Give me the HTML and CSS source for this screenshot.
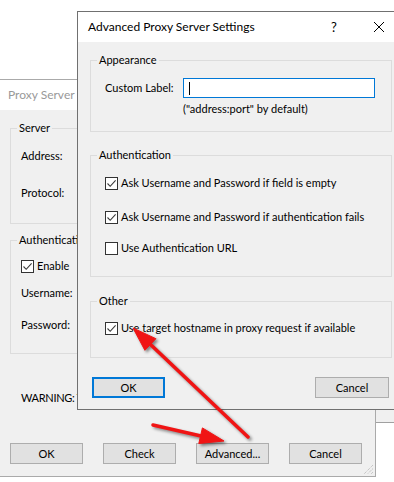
FILE: index.html
```html
<!DOCTYPE html>
<html lang="en">
<head>
  <meta charset="UTF-8" />
  <meta name="viewport" content="width=device-width, initial-scale=1.0"/>
  <title>Advanced Proxy Server Settings</title>
  <link rel="stylesheet" href="styles.css">
</head>
<body>

  <!-- some other window far behind -->
  <div class="win win-far"></div>

  <!-- Proxy Server dialog (inactive, behind) -->
  <div class="win win-back">
    <div class="titlebar titlebar-inactive">Proxy Server</div>
    <div class="win-body">
      <fieldset class="group group-server">
        <legend>Server</legend>
        <div class="line">Address:</div>
        <div class="line mt-21">Protocol:</div>
      </fieldset>

      <fieldset class="group group-login">
        <legend>Authentication</legend>
        <div class="check">
          <span class="box"><svg width="11" height="11" viewBox="0 0 11 11"><polyline points="1.5,5.5 4.2,8.3 9.6,2.4" fill="none" stroke="#3a3a3a" stroke-width="1.1"/></svg></span>
          Enable
        </div>
        <div class="line mt-11">Username:</div>
        <div class="line mt-16">Password:</div>
      </fieldset>

      <!-- only the start of the warning shows beside the front dialog -->
      <div class="warning">WARNING: T</div>

      <div class="buttons buttons-back">
        <button class="btn">OK</button>
        <button class="btn">Check</button>
        <button class="btn">Advanced...</button>
        <button class="btn">Cancel</button>
      </div>
    </div>
    <svg class="grip" width="11" height="11" viewBox="0 0 11 11">
      <path d="M10 1 L1 10 M10 4.5 L4.5 10 M10 8 L8 10" stroke="#b4b4b4" stroke-width="1" stroke-dasharray="1 1" fill="none"/>
    </svg>
  </div>

  <!-- Advanced Proxy Server Settings (active) -->
  <div class="win win-front">
    <div class="titlebar">
      <span>Advanced Proxy Server Settings</span>
      <span class="caption-btn caption-help">?</span>
      <span class="caption-btn">
        <svg width="10" height="10" viewBox="0 0 10 10"><path d="M0 0 L10 10 M10 0 L0 10" stroke="#000" stroke-width="1"/></svg>
      </span>
    </div>
    <div class="win-body">
      <fieldset class="group group-appearance">
        <legend>Appearance</legend>
        <div class="field-row">
          <span class="field-label">Custom Label:</span>
          <div class="input"><span class="caret"></span></div>
        </div>
        <div class="hint">("address:port" by default)</div>
      </fieldset>

      <fieldset class="group group-auth">
        <legend>Authentication</legend>
        <div class="check">
          <span class="box"><svg width="11" height="11" viewBox="0 0 11 11"><polyline points="1.5,5.5 4.2,8.3 9.6,2.4" fill="none" stroke="#3a3a3a" stroke-width="1.1"/></svg></span>
          Ask Username and Password if field is empty
        </div>
        <div class="check mt-18">
          <span class="box"><svg width="11" height="11" viewBox="0 0 11 11"><polyline points="1.5,5.5 4.2,8.3 9.6,2.4" fill="none" stroke="#3a3a3a" stroke-width="1.1"/></svg></span>
          Ask Username and Password if authentication fails
        </div>
        <div class="check mt-15">
          <span class="box"></span>
          Use Authentication URL
        </div>
      </fieldset>

      <fieldset class="group group-other">
        <legend>Other</legend>
        <div class="check">
          <span class="box"><svg width="11" height="11" viewBox="0 0 11 11"><polyline points="1.5,5.5 4.2,8.3 9.6,2.4" fill="none" stroke="#3a3a3a" stroke-width="1.1"/></svg></span>
          Use target hostname in proxy request if available
        </div>
      </fieldset>

      <div class="buttons buttons-front">
        <button class="btn btn-default">OK</button>
        <button class="btn btn-wide">Cancel</button>
      </div>
    </div>
  </div>

  <!-- red annotation arrows drawn over the screenshot -->
  <svg class="arrows" width="394" height="482" viewBox="0 0 394 482">
    <g fill="#f01414" stroke="#f01414">
      <line x1="248" y1="437" x2="150" y2="344" stroke-width="3.5" stroke-linecap="round"/>
      <polygon points="133,328 144.9,350.3 155.9,338.7" stroke-width="1" stroke-linejoin="round"/>
      <line x1="153" y1="425" x2="201" y2="436" stroke-width="3.5" stroke-linecap="round"/>
      <polygon points="224,441 202.4,427.9 198.8,443.5" stroke-width="1" stroke-linejoin="round"/>
    </g>
  </svg>

</body>
</html>
```

FILE: styles.css
```css
body {
  margin: 0;
  width: 394px;
  height: 482px;
  overflow: hidden;
  position: relative;
  background: #fff;
  font-family: Lato, 'Liberation Sans', sans-serif;
  font-size: 11px;
  line-height: 16px;
  color: #000;
}

/* windows */
.win {
  position: absolute;
  box-sizing: border-box;
  background: #f0f0f0;
}
.win-far {
  left: 370px;
  top: 300px;
  width: 24px;
  height: 123px;
  border: 1px solid #a0a0a0;
  border-right: none;
}
.win-back {
  left: 0;
  top: 79px;
  width: 376px;
  height: 398px;
  border: 1px solid #aaaaaa;
  border-left: none;
}
.win-front {
  left: 77px;
  top: 11px;
  width: 317px;
  height: 399px;
  border: 1px solid #707070;
  border-right: none;
}

.titlebar {
  height: 30px;
  background: #fff;
  display: flex;
  align-items: center;
  padding-left: 10px;
  font-size: 12px;
}
.titlebar-inactive {
  padding-left: 8px;
  color: #999;
}
.caption-btn {
  width: 30px;
  height: 30px;
  display: flex;
  align-items: center;
  justify-content: center;
}
.caption-help {
  margin-left: auto;
  margin-right: 15px;
  font-size: 13px;
}

.win-body {
  padding-top: 10px;
}
.win-back .win-body {
  padding-left: 10px;
  padding-right: 12px;
}
.win-front .win-body {
  padding-left: 12px;
  padding-right: 2px;
}

/* group boxes */
.group {
  margin: 0;
  border: 1px solid #dcdcdc;
  min-width: 0;
}
.group legend {
  padding: 0 2px;
  line-height: 16px;
}
.win-front .group {
  padding-left: 14px;
  padding-right: 0;
}
.win-front .group legend {
  margin-left: -8px;
}
.win-back .group {
  padding-left: 10px;
  padding-right: 0;
}
.win-back .group legend {
  margin-left: -4px;
  white-space: nowrap;
}

.group-server { padding-top: 12px; padding-bottom: 22px; }
.group-login { margin-top: 8px; padding-top: 10px; padding-bottom: 20px; }
.group-appearance { padding-top: 10px; padding-bottom: 14px; }
.group-auth { margin-top: 15px; padding-top: 12px; padding-bottom: 20px; }
.group-other { margin-top: 16px; padding-top: 11px; padding-bottom: 21px; }

.line {
  height: 16px;
}
.mt-11 { margin-top: 11px; }
.mt-15 { margin-top: 15px; }
.mt-16 { margin-top: 16px; }
.mt-18 { margin-top: 18px; }
.mt-21 { margin-top: 21px; }

.field-row {
  display: flex;
  align-items: center;
  height: 20px;
}
.field-label {
  width: 78px;
}
.input {
  width: 192px;
  height: 20px;
  box-sizing: border-box;
  border: 1px solid #0078d7;
  background: #fff;
  display: flex;
  align-items: center;
  padding-left: 5px;
}
.caret {
  width: 1px;
  height: 13px;
  background: #000;
}
.hint {
  margin: 3px 0 0 78px;
}

/* check boxes */
.check {
  display: flex;
  align-items: center;
  gap: 3px;
  height: 16px;
  white-space: nowrap;
}
.box {
  width: 13px;
  height: 13px;
  box-sizing: border-box;
  border: 1px solid #333;
  background: #fff;
  display: flex;
  align-items: center;
  justify-content: center;
  flex: none;
}

.warning {
  margin-top: 36px;
  margin-left: 11px;
  white-space: nowrap;
  letter-spacing: -0.3px;
}

/* buttons */
.buttons {
  display: flex;
}
.buttons-back {
  margin-top: 37px;
  gap: 20px;
}
.buttons-front {
  margin-top: 19px;
  justify-content: space-between;
  padding: 0 3px 0 2px;
}
.btn {
  width: 73px;
  height: 21px;
  box-sizing: border-box;
  padding: 0;
  border: 1px solid #adadad;
  background: #e1e1e1;
  font: inherit;
  color: #000;
}
.btn-wide {
  width: 74px;
}
.btn-default {
  border: 2px solid #0078d7;
}

.grip {
  position: absolute;
  right: 1px;
  bottom: 1px;
}

.arrows {
  position: absolute;
  left: 0;
  top: 0;
  pointer-events: none;
  filter: drop-shadow(2px 2px 1.5px rgba(0, 0, 0, 0.45));
}
```
